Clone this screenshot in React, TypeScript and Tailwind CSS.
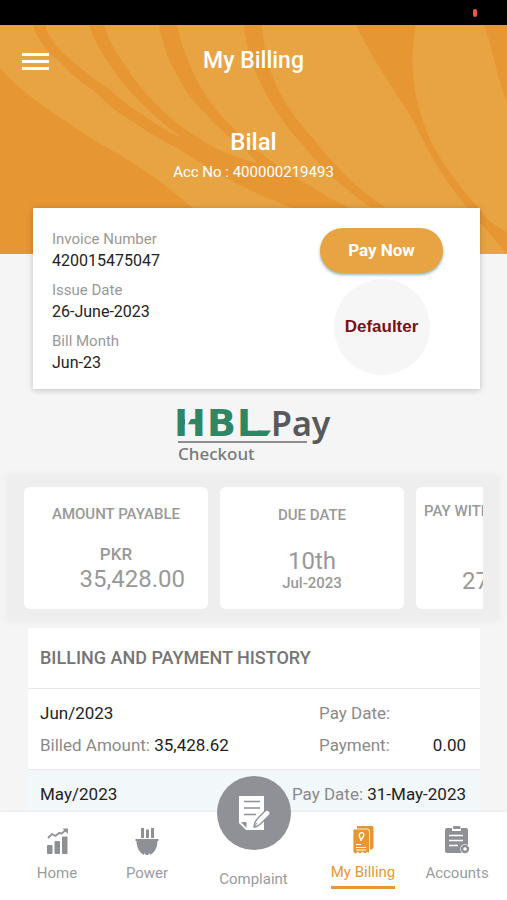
import React from 'react';

interface HistoryEntry {
  month: string;
  payDate: string;
  billed?: string;
  payment?: string;
}

const history: HistoryEntry[] = [
  { month: 'Jun/2023', payDate: '', billed: '35,428.62', payment: '0.00' },
  { month: 'May/2023', payDate: '31-May-2023' },
];

const invoice = [
  { label: 'Invoice Number', value: '420015475047' },
  { label: 'Issue Date', value: '26-June-2023' },
  { label: 'Bill Month', value: 'Jun-23' },
];

const HeaderPattern = () => (
  <svg className="absolute inset-0 w-full h-full" viewBox="0 0 507 229" preserveAspectRatio="none" aria-hidden="true">
    <rect width="507" height="229" fill="#e8a443" />
    <g fill="#e69733">
      <path d="M0 43 C22 68 45 82 67 97 C92 115 113 126 133 138 C155 152 175 168 190 181 L270 229 H0 Z" />
      <path d="M33 0 C37 14 46 26 60 37 C71 49 81 57 93 65 C104 76 115 86 127 93 C144 104 160 115 177 123 L220 150 C243 162 267 174 290 182 L410 229 L347 182 C320 168 296 153 273 137 L253 137 C238 133 224 128 210 120 C192 110 175 98 160 83 C147 70 136 58 127 43 C116 28 108 14 104 0 H89 C94 15 101 28 110 40 C119 54 130 67 143 80 C155 92 168 103 182 113 C168 107 155 99 143 90 C131 83 120 74 110 65 C92 52 75 40 60 25 C53 18 48 10 45 0 Z" />
      <path d="M159 0 C162 18 168 35 177 50 C185 66 195 79 207 90 C216 101 226 110 237 117 L257 137 L273 137 C258 127 245 116 233 103 C215 86 202 67 193 47 C186 32 180 16 177 0 Z" />
      <path d="M244 0 C246 20 251 39 260 57 C270 79 284 99 300 117 C321 142 344 164 370 182 H385 C357 164 333 140 313 113 C296 95 282 75 273 53 C267 36 263 18 262 0 Z" />
      <path d="M356 0 C374 38 397 68 414 97 C428 126 445 157 465 180 L507 229 V207 C492 200 482 190 480 184 C455 157 432 127 422 93 C411 60 410 29 416 0 Z" />
      <path d="M484 0 C494 26 496 52 507 76 V0 Z" />
    </g>
  </svg>
);

const HblPayLogo = () => (
  <svg className="w-40 h-16 overflow-visible" viewBox="0 0 160 64" role="img" aria-label="HBL Pay Checkout">
    <g fill="#2e8665" fontFamily="DejaVu Sans" fontWeight="700" fontSize="38">
      <text x="0" y="35">H</text>
      <text x="33" y="35">B</text>
      <text x="63" y="35">L</text>
    </g>
    <path d="M84 29.500 H97 L93 35 H84 Z" fill="#2e8665" />
    <path d="M11 16 H18 L13 25 H11 Z" fill="#f5f5f5" />
    <text x="97" y="35" fill="#57595d" fontFamily="Noto Sans" fontWeight="600" fontSize="34">Pay</text>
    <path d="M4 41 H133" stroke="#8b8d8f" strokeWidth="2" />
    <text x="4" y="59" fill="#77797b" fontFamily="Noto Sans" fontWeight="500" fontSize="17">Checkout</text>
  </svg>
);

const HomeIcon = () => (
  <svg className="w-7 h-7" viewBox="0 0 28 28" fill="#8e9096" aria-hidden="true">
    <rect x="4" y="18" width="5.500" height="9" rx="1" />
    <rect x="11.500" y="14" width="5.500" height="13" rx="1" />
    <rect x="19" y="9.500" width="5.500" height="17.500" rx="1" />
    <path d="M5 11 L9 7 L12.500 9 L16 6 L18.500 6.500 L23 3" fill="none" stroke="#8e9096" strokeWidth="1.800" />
    <path d="M19.500 1.500 H25 V7 Z" />
  </svg>
);

const PowerIcon = () => (
  <svg className="w-7 h-7" viewBox="0 0 28 28" fill="#8e9096" aria-hidden="true">
    <rect x="8" y="1" width="3" height="10" />
    <rect x="13" y="2.500" width="3" height="8.500" />
    <rect x="18" y="1" width="3" height="10" />
    <path d="M2.500 12 H25.500 V14 H24.500 C24.500 21 21 26 17 28 L16.500 26 L15 28 H13 L11.500 26 L11 28 C7 26 3.500 21 3.500 14 H2.500 Z" />
  </svg>
);

const ComplaintIcon = () => (
  <svg className="w-9 h-9" viewBox="0 0 36 36" aria-hidden="true">
    <path d="M3 1 H28 V35 H10 L3 28 Z" fill="#fff" />
    <path d="M5 27 H10.500 V33 Z" fill="#8f9197" />
    <path d="M8 6.500 H24 M8 13 H24 M8 19.500 H20" stroke="#8f9197" strokeWidth="1.600" />
    <path d="M18 32 C18 28 20 25 22.500 22.500 L29 16 Q31 14 33 16 Q35.500 18 33 20.500 L26 27.500 C23.500 30 21 32 18 32 Z" fill="#fff" stroke="#8f9197" strokeWidth="1.400" />
    <path d="M18 32 L21 28" stroke="#8f9197" />
  </svg>
);

const BillingIcon = () => (
  <svg className="w-8 h-8" viewBox="0 0 32 32" aria-hidden="true">
    <path d="M10 2 H25 Q26.500 2 26.500 4 V24 L24 26 L22 24 V9 Q22 7 20 7 H10 Z" fill="#e69733" />
    <path d="M7 5 H20 Q22.500 5 22.500 8 V30 L20 28 L18 30 L15.500 28 L13 30 L11 28 L8.500 30 L6 28 V7 Q6 5 7 5 Z" fill="#e69733" stroke="#fff" strokeWidth="0.800" />
    <path d="M14 17 C14 14 11.500 13 12.500 10 C14 7.500 18 9 16.500 12 C16 14 14.500 13.500 14 17" fill="none" stroke="#fff" strokeWidth="1.400" />
    <path d="M9 20.500 H14 M9 23.500 H19 M9 26 H19" stroke="#fff" strokeWidth="1" />
  </svg>
);

const AccountsIcon = () => (
  <svg className="w-8 h-8" viewBox="0 0 32 32" aria-hidden="true">
    <path d="M6 5 H11 V8 H20 V5 H25 Q27 5 27 7 V30 H6 Q4 30 4 28 V7 Q4 5 6 5 Z" fill="#8e9096" />
    <rect x="12" y="3" width="7.500" height="3" rx="1" fill="#8e9096" />
    <path d="M8 12.500 H22 M8 17.500 H22 M8 22.500 H17" stroke="#fff" strokeWidth="1.400" />
    <circle cx="24" cy="26" r="4.800" fill="#fff" />
    <circle cx="24" cy="26" r="3" fill="#fff" stroke="#8e9096" strokeWidth="2.400" />
  </svg>
);

const App: React.FC = () => {
  return (
    <div className="h-screen flex flex-col overflow-hidden bg-[#f5f5f5] font-['Roboto',sans-serif] text-[#222]">
      <div className="h-[25px] shrink-0 bg-black flex items-center justify-end pr-[30px]">
        <span className="w-1 h-2 rounded-sm bg-[#ef5545]"></span>
      </div>

      <main className="flex-1 min-h-0 overflow-y-auto [scrollbar-width:none]">
        <header className="relative h-[229px] text-white">
          <HeaderPattern />
          <div className="relative">
            <div className="grid grid-cols-[1fr_auto_1fr] items-center px-[22px] pt-5">
              <button aria-label="Menu" className="flex flex-col gap-1 w-[27px]">
                <span className="w-full h-[3px] bg-white"></span>
                <span className="w-full h-[3px] bg-white"></span>
                <span className="w-full h-[3px] bg-white"></span>
              </button>
              <h1 className="text-[23px] leading-8 font-medium">My Billing</h1>
            </div>
            <div className="pt-[50px] text-center">
              <h2 className="text-[24px] leading-[30px] font-medium">Bilal</h2>
              <p className="text-[15px] leading-[30px]">Acc No : 400000219493</p>
            </div>
          </div>
        </header>

        <section className="relative mr-[27px] ml-[33px] -mt-[46px] h-[181px] bg-white shadow-[0_1px_6px_rgba(0,0,0,0.22)] flex justify-between pl-[19px] pr-[37px] pt-5">
          <dl className="flex flex-col gap-2">
            {invoice.map(item => (
              <div key={item.label}>
                <dt className="text-[15px] leading-[22px] text-[#999]">{item.label}</dt>
                <dd className="text-[16px] leading-[21px]">{item.value}</dd>
              </div>
            ))}
          </dl>
          <div className="flex flex-col items-center gap-1.5">
            <button className="w-[123px] h-[45px] rounded-full bg-[#e8a443] text-white text-[17px] font-bold shadow-[0_2px_3px_rgba(0,60,60,0.4)]">Pay Now</button>
            <div className="w-24 h-24 rounded-full bg-[#f6f6f6] flex items-center justify-center">
              <span className="font-['Liberation_Sans',sans-serif] text-[17px] font-bold text-[#791117]">Defaulter</span>
            </div>
          </div>
        </section>

        <div className="flex justify-center pt-3 pb-[3px]">
          <HblPayLogo />
        </div>

        <section className="mx-2 mt-2 px-4 py-[11px] bg-[#eeeeee] shadow-[0_0_6px_2px_#eeeeee] text-[#999]">
          <div className="flex gap-3 overflow-x-auto [scrollbar-width:none]">
            <div className="w-[184px] h-[122px] shrink-0 rounded-md bg-white pt-[17px] text-center">
              <h3 className="text-[15px] leading-5 font-medium">AMOUNT PAYABLE</h3>
              <p className="pt-5 text-[17px] leading-5 font-medium">PKR</p>
              <p className="pr-[23px] text-[24px] leading-[30px] text-right">35,428.00</p>
            </div>
            <div className="w-[184px] h-[122px] shrink-0 rounded-md bg-white pt-[17px] text-center">
              <h3 className="text-[15px] leading-[22px] font-medium">DUE DATE</h3>
              <p className="pt-5 text-[24px] leading-[30px]">10th</p>
              <p className="text-[15px] leading-[14px] font-medium">Jul-2023</p>
            </div>
            <div className="w-[184px] h-[122px] shrink-0 rounded-md bg-white pt-3.5 pl-2">
              <h3 className="text-[15px] leading-5 font-medium">PAY WITH</h3>
              <p className="pt-[45px] pl-[38px] text-[24px] leading-[30px]">27</p>
            </div>
          </div>
        </section>

        <section className="relative mt-2 ml-7 mr-[27px] bg-white text-[17px] leading-8">
          <h2 className="h-[60px] px-3 flex items-center text-[18px] font-medium text-[#757575]">BILLING AND PAYMENT HISTORY</h2>
          {history.map((entry, i) => (
            <div key={entry.month} className={`h-[81px] flex justify-between pl-3 pr-3.5 pt-2 border-t border-[#e6e8e9] ${i % 2 ? 'bg-[#f2f8fa]' : 'bg-white'}`}>
              <div>
                <p>{entry.month}</p>
                {entry.billed && <p><span className="text-[#8a8a8a]">Billed Amount:</span> {entry.billed}</p>}
              </div>
              <div className="min-w-[147px]">
                <p><span className="text-[#8a8a8a]">Pay Date:</span> {entry.payDate}</p>
                {entry.payment && (
                  <p className="flex justify-between"><span className="text-[#8a8a8a]">Payment:</span> {entry.payment}</p>
                )}
              </div>
            </div>
          ))}
        </section>
      </main>

      <nav className="relative h-[88px] shrink-0 bg-white shadow-[0_-1px_2px_rgba(0,0,0,0.05)] grid grid-cols-[90fr_90fr_123fr_96fr_92fr] pl-3 pr-1 text-[15px] leading-5 text-[#999b9f]">
        <a href="#home" className="flex flex-col items-center gap-2 pt-[15px]">
          <HomeIcon />
          Home
        </a>
        <a href="#power" className="flex flex-col items-center gap-2 pt-[15px]">
          <PowerIcon />
          Power
        </a>
        <a href="#complaint" className="flex flex-col items-center gap-[19px] -mt-9">
          <span className="w-[74px] h-[74px] rounded-full bg-[#8f9197] flex items-center justify-center">
            <ComplaintIcon />
          </span>
          Complaint
        </a>
        <a href="#billing" className="flex flex-col items-center pt-3 text-[#e69733]">
          <BillingIcon />
          <span className="pt-1.5 pb-1 border-b-3 border-[#e69733]">My Billing</span>
        </a>
        <a href="#accounts" className="flex flex-col items-center gap-2 pt-[11px]">
          <AccountsIcon />
          Accounts
        </a>
      </nav>
    </div>
  );
};

export default App;
